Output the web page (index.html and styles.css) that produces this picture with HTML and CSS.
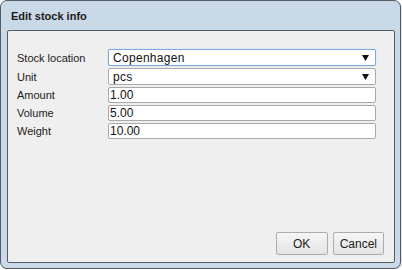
FILE: index.html
```html
<!DOCTYPE html>
<html>
<head>
<meta charset="utf-8">
<link rel="stylesheet" href="styles.css">
</head>
<body>
<div class="dialog">
  <div class="title">Edit stock info</div>
  <div class="panel">
    <div class="form">
      <div class="label">Stock location</div>
      <div class="select focused"><span>Copenhagen</span><svg class="arrow" width="7" height="6" viewBox="0 0 7 6"><polygon points="0,0 7,0 3.5,6" fill="#111"/></svg></div>
      <div class="label">Unit</div>
      <div class="select"><span>pcs</span><svg class="arrow" width="7" height="6" viewBox="0 0 7 6"><polygon points="0,0 7,0 3.5,6" fill="#111"/></svg></div>
      <div class="label">Amount</div>
      <input class="input" type="text" value="1.00">
      <div class="label">Volume</div>
      <input class="input" type="text" value="5.00">
      <div class="label">Weight</div>
      <input class="input" type="text" value="10.00">
    </div>
    <div class="buttons">
      <button class="btn ok">OK</button>
      <button class="btn">Cancel</button>
    </div>
  </div>
</div>
</body>
</html>
```

FILE: styles.css
```css
html, body {
  margin: 0;
  padding: 0;
  background: #ffffff;
}
body {
  font-family: "Liberation Sans", Arial, sans-serif;
}
.dialog {
  box-sizing: border-box;
  width: 401px;
  height: 269px;
  border: 1px solid #535b66;
  border-radius: 7px;
  background: #c9d9e7;
  padding: 0 5px 5px 6px;
  display: flex;
  flex-direction: column;
  box-shadow: 1px 1px 1px rgba(0,0,0,0.15);
}
.title {
  height: 29px;
  line-height: 30px;
  font-size: 11px;
  font-weight: bold;
  color: #1a1a1a;
  padding-left: 4px;
}
.panel {
  flex: 1;
  border: 1px solid #555c66;
  border-radius: 2px;
  background: #efefef;
  display: flex;
  flex-direction: column;
  padding: 18px 10px 7px 9px;
}
.form {
  display: grid;
  grid-template-columns: 91px 268px;
  grid-auto-rows: auto;
  row-gap: 2px;
  align-items: center;
}
.label {
  font-size: 11px;
  color: #222;
}
.select {
  box-sizing: border-box;
  height: 17px;
  border: 1px solid #a9a9a9;
  border-radius: 2px;
  background: #fff;
  display: flex;
  align-items: center;
  justify-content: space-between;
  padding: 0 6px 0 4px;
  font-size: 12px;
  letter-spacing: 0.3px;
  color: #111;
}
.select.focused {
  border-color: #7ea6e0;
  box-shadow: 0 0 1px #9bbcec;
}
.input {
  box-sizing: border-box;
  height: 16px;
  width: 268px;
  margin: 0;
  border: 1px solid #a9a9a9;
  border-radius: 2px;
  background: #fff;
  padding: 0 1px;
  font-family: "Liberation Sans", Arial, sans-serif;
  font-size: 12px;
  color: #111;
  outline: none;
}
.buttons {
  margin-top: auto;
  display: flex;
  justify-content: flex-end;
  gap: 5px;
}
.btn {
  box-sizing: border-box;
  height: 23px;
  border: 1px solid #adadad;
  border-radius: 2px;
  background: linear-gradient(#f6f6f6, #e3e3e3);
  font-family: "Liberation Sans", Arial, sans-serif;
  font-size: 12px;
  color: #222;
  padding: 0 6px;
  margin: 0;
}
.btn.ok {
  width: 52px;
}
```
